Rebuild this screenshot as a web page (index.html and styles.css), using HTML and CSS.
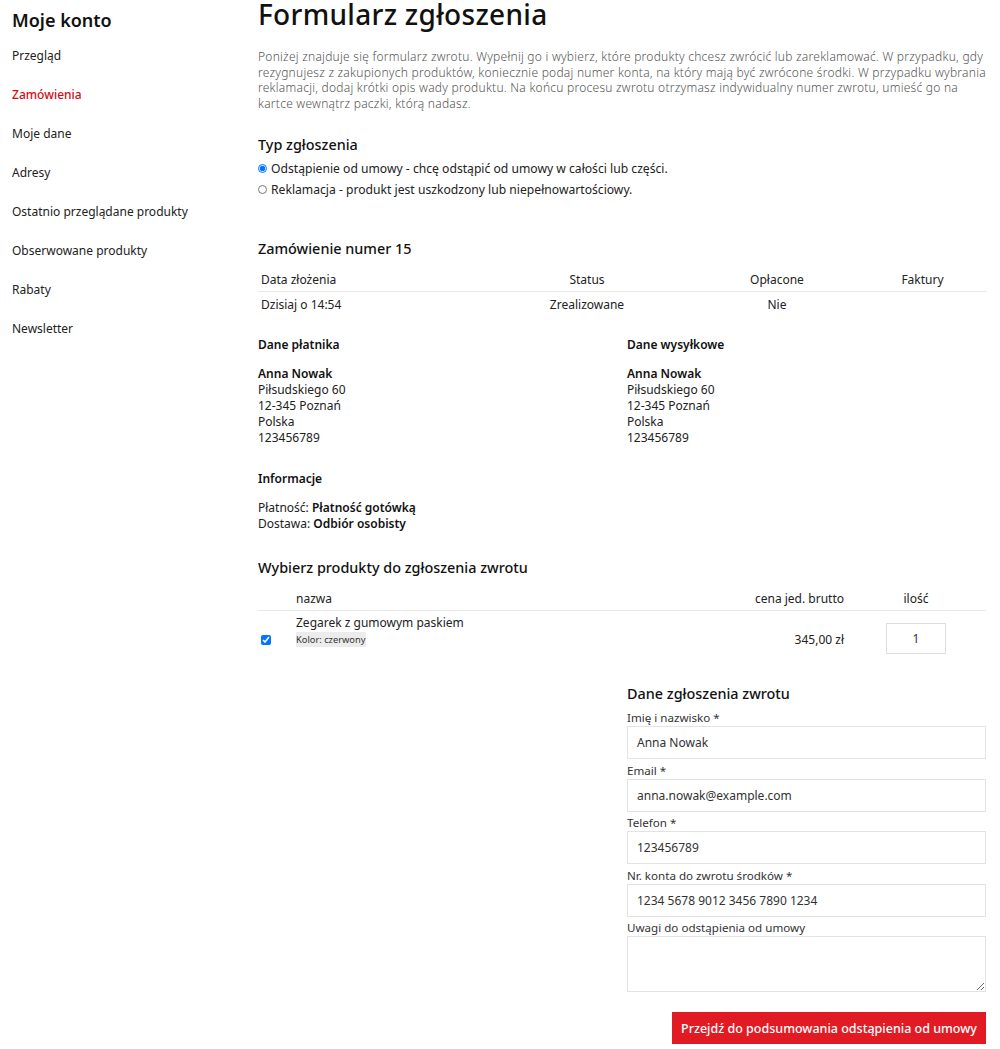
FILE: index.html
```html
<!DOCTYPE html>
<html lang="pl">
<head>
  <meta charset="UTF-8" />
  <meta name="viewport" content="width=device-width, initial-scale=1.0"/>
  <title>Formularz zgłoszenia</title>
  <link rel="stylesheet" href="styles.css">
</head>
<body>

  <div class="account">
    <aside class="sidebar">
      <h2 class="sidebar-title">Moje konto</h2>
      <ul class="nav">
        <li><a href="#">Przegląd</a></li>
        <li><a href="#" class="active">Zamówienia</a></li>
        <li><a href="#">Moje dane</a></li>
        <li><a href="#">Adresy</a></li>
        <li><a href="#">Ostatnio przeglądane produkty</a></li>
        <li><a href="#">Obserwowane produkty</a></li>
        <li><a href="#">Rabaty</a></li>
        <li><a href="#">Newsletter</a></li>
      </ul>
    </aside>

    <main class="content">
      <h1 class="page-title">Formularz zgłoszenia</h1>

      <p class="intro">Poniżej znajduje się formularz zwrotu. Wypełnij go i wybierz, które produkty chcesz zwrócić lub zareklamować. W przypadku, gdy rezygnujesz z zakupionych produktów, koniecznie podaj numer konta, na który mają być zwrócone środki. W przypadku wybrania reklamacji, dodaj krótki opis wady produktu. Na końcu procesu zwrotu otrzymasz indywidualny numer zwrotu, umieść go na kartce wewnątrz paczki, którą nadasz.</p>

      <h3 class="section-title">Typ zgłoszenia</h3>
      <div class="radio-list">
        <label class="radio"><input type="radio" name="type" checked> Odstąpienie od umowy - chcę odstąpić od umowy w całości lub części.</label>
        <label class="radio"><input type="radio" name="type"> Reklamacja - produkt jest uszkodzony lub niepełnowartościowy.</label>
      </div>

      <h3 class="section-title order-title">Zamówienie numer 15</h3>
      <table class="order-table">
        <thead>
          <tr>
            <th class="col-date">Data złożenia</th>
            <th class="col-status">Status</th>
            <th class="col-paid">Opłacone</th>
            <th class="col-invoice">Faktury</th>
          </tr>
        </thead>
        <tbody>
          <tr>
            <td class="col-date">Dzisiaj o 14:54</td>
            <td class="col-status">Zrealizowane</td>
            <td class="col-paid">Nie</td>
            <td class="col-invoice"></td>
          </tr>
        </tbody>
      </table>

      <div class="addresses">
        <div class="address">
          <h4 class="block-title">Dane płatnika</h4>
          <p><strong>Anna Nowak</strong><br>Piłsudskiego 60<br>12-345 Poznań<br>Polska<br>123456789</p>
        </div>
        <div class="address">
          <h4 class="block-title">Dane wysyłkowe</h4>
          <p><strong>Anna Nowak</strong><br>Piłsudskiego 60<br>12-345 Poznań<br>Polska<br>123456789</p>
        </div>
      </div>

      <div class="info">
        <h4 class="block-title">Informacje</h4>
        <p>Płatność: <strong>Płatność gotówką</strong><br>Dostawa: <strong>Odbiór osobisty</strong></p>
      </div>

      <h3 class="section-title products-title">Wybierz produkty do zgłoszenia zwrotu</h3>
      <table class="products-table">
        <thead>
          <tr>
            <th class="col-check"></th>
            <th class="col-name">nazwa</th>
            <th class="col-price">cena jed. brutto</th>
            <th class="col-qty">ilość</th>
          </tr>
        </thead>
        <tbody>
          <tr>
            <td class="col-check"><input type="checkbox" checked></td>
            <td class="col-name">
              Zegarek z gumowym paskiem
              <span class="variant">Kolor: czerwony</span>
            </td>
            <td class="col-price">345,00 zł</td>
            <td class="col-qty"><input class="qty" type="text" value="1"></td>
          </tr>
        </tbody>
      </table>

      <form class="return-form">
        <h3 class="section-title">Dane zgłoszenia zwrotu</h3>
        <label class="field">
          <span>Imię i nazwisko *</span>
          <input type="text" value="Anna Nowak">
        </label>
        <label class="field">
          <span>Email *</span>
          <input type="text" value="anna.nowak@example.com">
        </label>
        <label class="field">
          <span>Telefon *</span>
          <input type="text" value="123456789">
        </label>
        <label class="field">
          <span>Nr. konta do zwrotu środków *</span>
          <input type="text" value="1234 5678 9012 3456 7890 1234">
        </label>
        <label class="field">
          <span>Uwagi do odstąpienia od umowy</span>
          <textarea></textarea>
        </label>
        <div class="form-actions">
          <button type="button" class="btn-submit">Przejdź do podsumowania odstąpienia od umowy</button>
        </div>
      </form>
    </main>
  </div>

</body>
</html>
```

FILE: styles.css
```css
body {
  margin: 0;
  font-family: "Noto Sans", "Open Sans", sans-serif;
  color: #222;
  background: #fff;
}

.account {
  display: grid;
  grid-template-columns: 246px 728px;
  padding-left: 12px;
}

/* sidebar */

.sidebar-title {
  margin: 8px 0 0;
  font-size: 18px;
  line-height: 24px;
  font-weight: 600;
  color: #111;
}

.nav {
  list-style: none;
  margin: 4px 0 0;
  padding: 0;
}

.nav li {
  line-height: 39px;
  font-size: 12px;
}

.nav a {
  color: #222;
  text-decoration: none;
}

.nav a.active {
  color: #d60a12;
  font-weight: 500;
}

/* main column */

.page-title {
  margin: 0;
  font-size: 28px;
  line-height: 29px;
  font-weight: 500;
  letter-spacing: 0.3px;
  color: #111;
}

.intro {
  margin: 20px 0 0;
  font-size: 12px;
  line-height: 15.5px;
  font-weight: 300;
  letter-spacing: 0.25px;
  color: #555;
}

.section-title {
  margin: 24px 0 0;
  font-size: 14.4px;
  line-height: 20px;
  font-weight: 500;
  color: #111;
}

.radio-list {
  margin-top: 3px;
}

.radio {
  display: flex;
  align-items: center;
  gap: 4px;
  font-size: 12.15px;
  line-height: 21px;
}

.radio input {
  width: 9px;
  height: 9px;
  margin: 0;
}

.order-title {
  margin-top: 39px;
}

table {
  width: 100%;
  border-collapse: collapse;
  font-size: 12px;
}

th {
  font-weight: 400;
}

.order-table {
  margin-top: 10px;
  table-layout: fixed;
}

.order-table th {
  padding: 4px 0;
  line-height: 14px;
  border-bottom: 1px solid #e8e8e8;
}

.order-table td {
  padding: 6px 0;
  line-height: 14px;
}

.order-table .col-date { width: 240px; text-align: left; padding-left: 3px; }
.order-table .col-status { width: 172px; text-align: center; }
.order-table .col-paid { width: 208px; text-align: center; }
.order-table .col-invoice { text-align: center; padding-right: 22px; }

.addresses {
  display: grid;
  grid-template-columns: 1fr 1fr;
  gap: 10px;
  margin-top: 19px;
}

.block-title {
  margin: 0;
  font-size: 12px;
  line-height: 16px;
  font-weight: 600;
  color: #111;
}

.address p,
.info p {
  margin: 13px 0 0;
  font-size: 12px;
  line-height: 16px;
}

strong {
  font-weight: 600;
  color: #111;
}

.info {
  margin-top: 25px;
}

.products-title {
  margin-top: 26px;
}

.products-table {
  margin-top: 10px;
}

.products-table th {
  padding: 4px 0;
  line-height: 14px;
  border-bottom: 1px solid #e8e8e8;
}

.products-table td {
  padding: 5px 0 8px;
  line-height: 14px;
  vertical-align: top;
}

.products-table .col-check { width: 38px; text-align: left; }
.products-table .col-name { text-align: left; }
.products-table .col-price { width: 160px; text-align: right; padding-right: 22px; }
.products-table .col-qty { width: 100px; text-align: center; padding-right: 20px; }

.products-table td.col-check {
  padding-top: 24px;
}

.products-table td.col-price {
  padding-top: 22px;
}

.products-table td.col-qty {
  padding-top: 12px;
}

.col-check input {
  display: block;
  width: 10px;
  height: 10px;
  margin: 0 0 0 3px;
}

.variant {
  display: table;
  margin-top: 2px;
  padding: 0 6px;
  font-size: 9.3px;
  line-height: 15px;
  background: #ececec;
  color: #333;
}

.qty {
  width: 60px;
  height: 31px;
  box-sizing: border-box;
  border: 1px solid #ddd;
  text-align: center;
  font: inherit;
  font-size: 12px;
  color: #333;
}

/* return form */

.return-form {
  margin-left: 369px;
  padding-top: 14px;
}

.return-form .section-title {
  margin-top: 8px;
}

.field {
  display: block;
  margin-top: 3.5px;
}

.field:first-of-type {
  margin-top: 6px;
}

.field span {
  display: block;
  font-size: 11.6px;
  line-height: 16px;
  color: #333;
}

.field input,
.field textarea {
  display: block;
  width: 100%;
  height: 33px;
  box-sizing: border-box;
  margin: 0;
  padding: 0 9px;
  border: 1px solid #e3e3e3;
  font: inherit;
  font-size: 12px;
  color: #333;
}

.field textarea {
  height: 56px;
  resize: vertical;
}

.form-actions {
  display: flex;
  justify-content: flex-end;
  margin-top: 20px;
}

.btn-submit {
  width: 314px;
  height: 32px;
  padding: 0;
  background: #e21a23;
  color: #fff;
  border: none;
  font: inherit;
  font-size: 12.5px;
  font-weight: 500;
  white-space: nowrap;
  cursor: pointer;
}
```
